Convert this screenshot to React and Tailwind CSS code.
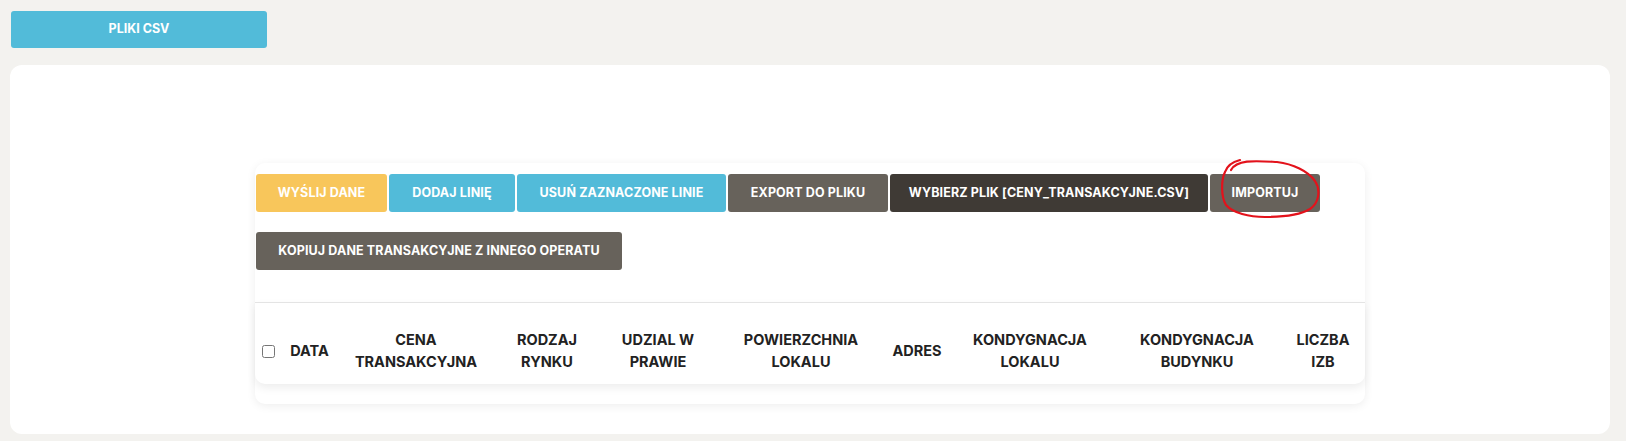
import React from 'react';

const font = { fontFamily: 'Inter, "Noto Sans", sans-serif' };

const buttons = [
  { label: 'WYŚLIJ DANE', cls: 'w-[131px] bg-[#f8c65b]' },
  { label: 'DODAJ LINIĘ', cls: 'w-[126px] bg-[#52bbd9]' },
  { label: 'USUŃ ZAZNACZONE LINIE', cls: 'w-[209px] bg-[#52bbd9]' },
  { label: 'EXPORT DO PLIKU', cls: 'w-[160px] bg-[#67625b]' },
  { label: 'WYBIERZ PLIK [CENY_TRANSAKCYJNE.CSV]', cls: 'w-[318px] bg-[#3f3a35]' },
  { label: 'IMPORTUJ', cls: 'w-[110px] bg-[#67625b]' },
  { label: 'KOPIUJ DANE TRANSAKCYJNE Z INNEGO OPERATU', cls: 'w-[366px] bg-[#67625b]' },
];

const columns = [
  { lines: ['DATA'], w: 'w-[55px]' },
  { lines: ['CENA', 'TRANSAKCYJNA'], w: 'w-[158px]' },
  { lines: ['RODZAJ', 'RYNKU'], w: 'w-[104px]' },
  { lines: ['UDZIAL W', 'PRAWIE'], w: 'w-[118px]' },
  { lines: ['POWIERZCHNIA', 'LOKALU'], w: 'w-[168px]' },
  { lines: ['ADRES'], w: 'w-[64px]' },
  { lines: ['KONDYGNACJA', 'LOKALU'], w: 'w-[162px]' },
  { lines: ['KONDYGNACJA', 'BUDYNKU'], w: 'w-[172px]' },
  { lines: ['LICZBA', 'IZB'], w: 'w-[80px]' },
];

function ActionButton({ label, cls }) {
  return (
    <button
      className={`h-[38px] rounded-[3px] text-white font-bold text-[12.5px] tracking-[0.01em] whitespace-nowrap ${cls}`}
    >
      {label}
    </button>
  );
}

export default function App() {
  return (
    <div className="relative h-[441px] bg-[#f3f2ef] pt-[11px] overflow-hidden" style={font}>
      <button className="ml-[11px] w-[256px] h-[37px] rounded-[3px] bg-[#52bbd9] text-white font-bold text-[12.5px]">
        PLIKI CSV
      </button>

      <div className="mt-[17px] ml-[10px] w-[1600px] h-[369px] rounded-[12px] bg-white pl-[245px] pt-[98px]">
        <div className="w-[1110px] rounded-[10px] bg-white shadow-[0_2px_10px_rgba(0,0,0,0.07)] pb-[20px]">
          <div className="flex flex-wrap gap-x-[2px] gap-y-[20px] pl-[1px] pt-[11px] pb-[32px]">
            {buttons.map((b) => (
              <ActionButton key={b.label} {...b} />
            ))}
          </div>

          <div className="border-t border-[#e4e4e4] rounded-b-[10px] bg-white shadow-[0_4px_8px_rgba(0,0,0,0.07)] flex items-center pt-[26px] pb-[11px]">
            <div className="w-[27px] pl-[7px] flex items-center">
              <input type="checkbox" className="w-[13px] h-[13px] m-0" />
            </div>
            {columns.map((c) => (
              <div
                key={c.lines.join(' ')}
                className={`${c.w} text-center font-bold text-[14.5px] leading-[22px] text-[#222] whitespace-nowrap`}
              >
                {c.lines.map((l) => (
                  <div key={l}>{l}</div>
                ))}
              </div>
            ))}
          </div>
        </div>
      </div>

      {/* red hand-drawn marker around IMPORTUJ */}
      <svg
        className="absolute left-[1207px] top-[150px] pointer-events-none"
        width="125"
        height="80"
        viewBox="0 0 125 80"
        fill="none"
      >
        <path
          d="M24 20 C30 9, 50 11, 70 12 C86 14, 101 21, 108 31 C114 40, 112 53, 103 59 C93 65, 75 67, 58 67 C42 67, 26 63, 19 55 C14 47, 14 30, 18 22 C20 16, 25 12, 33 10"
          stroke="#e3121b"
          strokeWidth="2.2"
          strokeLinecap="round"
          strokeLinejoin="round"
        />
      </svg>
    </div>
  );
}
